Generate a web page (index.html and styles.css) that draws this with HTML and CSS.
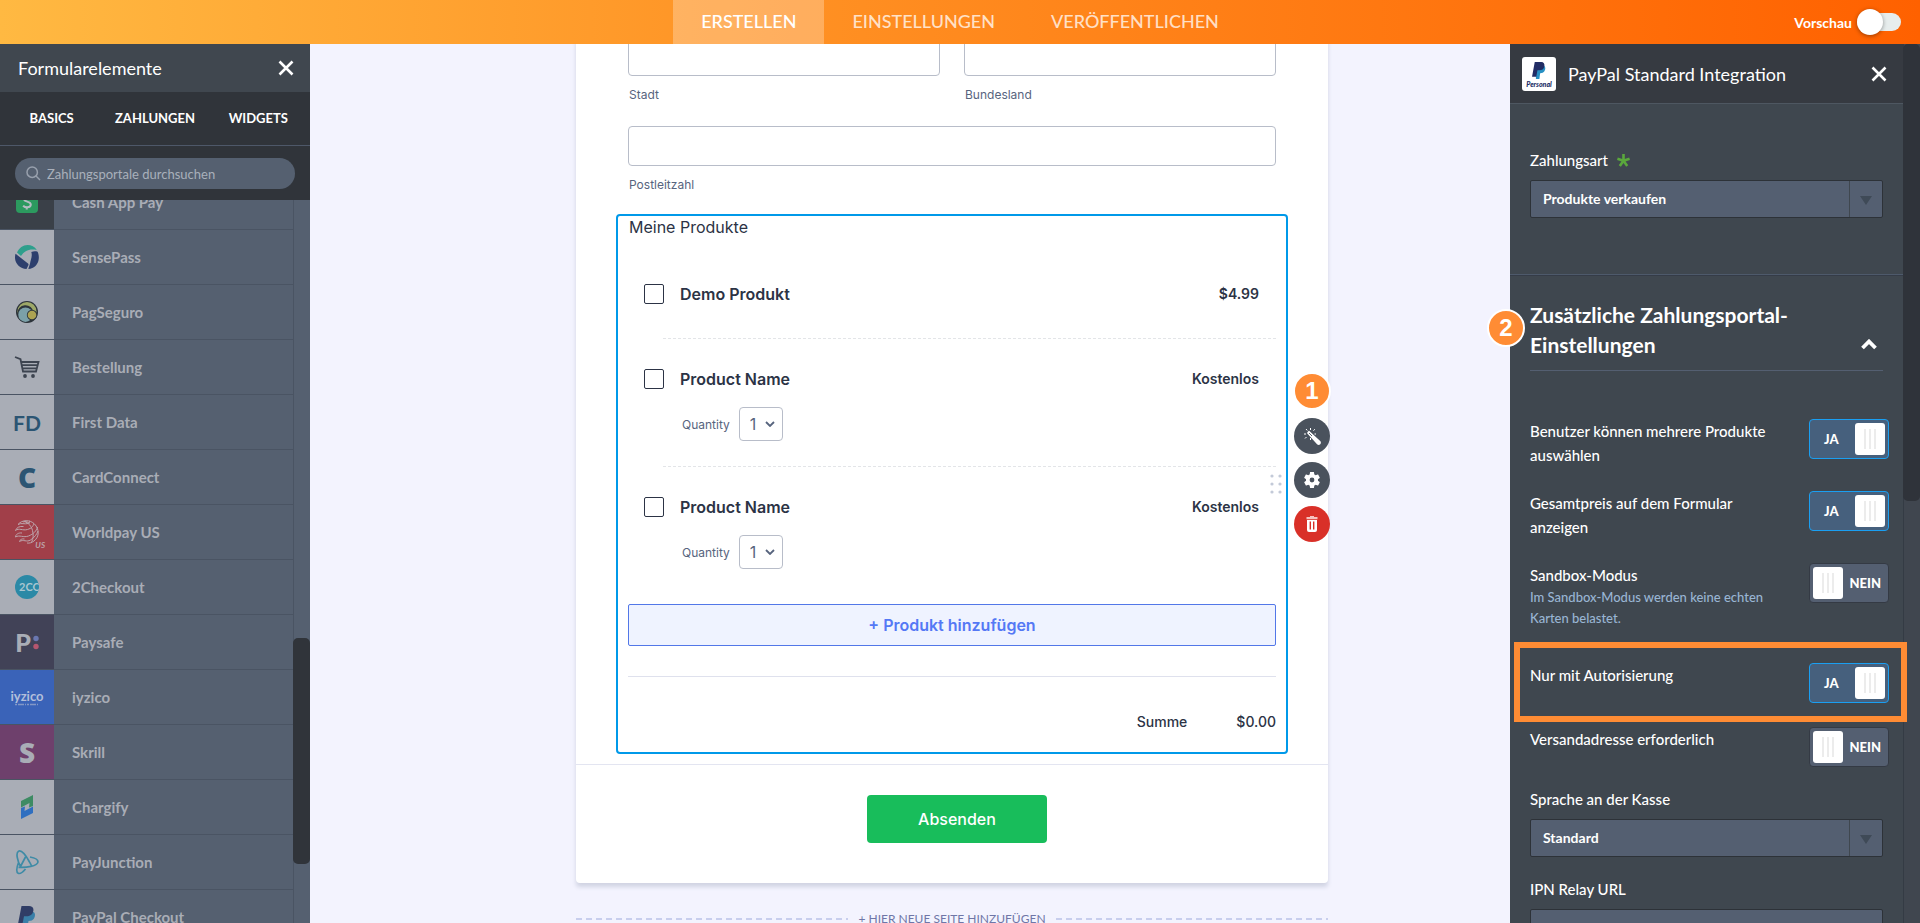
FILE: index.html
```html
<!DOCTYPE html>
<html lang="de">
<head>
    <meta charset="UTF-8">
    <meta name="viewport" content="width=device-width, initial-scale=1.0">
    <title>Formular-Generator</title>
    <link rel="stylesheet" href="styles.css">
</head>
<body>
    <header class="topbar">
        <nav class="nav">
            <a class="nav-tab active" href="#">ERSTELLEN</a>
            <a class="nav-tab" href="#">EINSTELLUNGEN</a>
            <a class="nav-tab" href="#">VERÖFFENTLICHEN</a>
        </nav>
        <label class="preview">
            Vorschau
            <input type="checkbox" class="preview-input">
        </label>
    </header>

    <main class="workspace">
        <!-- Form elements -->
        <aside class="elements">
            <div class="elements-header">
                <h2 class="panel-title">Formularelemente</h2>
                <button type="button" class="close" aria-label="Schließen">
                    <svg width="16" height="16" viewBox="0 0 16 16"><path d="M1.500 1.500L14.500 14.500M14.500 1.500L1.500 14.500" stroke="#fff" stroke-width="2.600"/></svg>
                </button>
            </div>
            <nav class="elements-tabs">
                <a href="#">BASICS</a>
                <a href="#">ZAHLUNGEN</a>
                <a href="#">WIDGETS</a>
            </nav>
            <div class="search">
                <div class="search-box">
                    <svg width="15" height="15" viewBox="0 0 15 15" fill="none" stroke="#98a0ad" stroke-width="1.5"><circle cx="6.2" cy="6.2" r="5.2"/><path d="M10 10L14 14"/></svg>
                    <input type="text" placeholder="Zahlungsportale durchsuchen" aria-label="Zahlungsportale durchsuchen">
                </div>
            </div>
            <div class="elements-scroll">
                <ul class="gateways">
                    <li class="gateway">
                        <span class="gateway-icon bg-cash"><svg width="22" height="22" viewBox="0 0 22 22"><rect width="22" height="22" rx="4" fill="#2c9a5f"/><path d="M14.6 7.2C13.6 6.3 12.4 5.9 11 5.9c-1.800 0-3 .8-3 2.200 0 3.400 6.800 1.700 6.800 5.500 0 1.700-1.500 2.700-3.500 2.700-1.600 0-3.100-.5-4.200-1.600M12 3.500l-.5 2.500M11 16l-.5 2.500" fill="none" stroke="#b5bcc2" stroke-width="2"/></svg></span>
                        <span class="gateway-name">Cash App Pay</span>
                    </li>
                    <li class="gateway">
                        <span class="gateway-icon"><svg width="24" height="24" viewBox="0 0 24 24"><path d="M2 7.500C4 3 8 0 12.500 0c4 0 7.200 1.700 9.300 5-4.500-.8-8.300-.3-11 1.200C8.700 7.400 7.300 9 6 11z" fill="#2e9f8c"/><path d="M.6 8.800L13 18.500c.8.700.6 1.500 0 2.500l-1.500 3C5 24-.3 18.500 0 12c0-1.200.2-2.200.6-3.200z" fill="#2d3f6d"/><path d="M16.300 7c2.200-.8 4.400-.9 6.300-.2 2.600 5.600 1.200 13.200-5.300 16.200-1.300.6-2.600.9-4 1l1.700-5.200c.3-4 2.800-7.300 1.300-11.800z" fill="#2d3f6d"/></svg></span>
                        <span class="gateway-name">SensePass</span>
                    </li>
                    <li class="gateway">
                        <span class="gateway-icon"><svg width="22" height="22" viewBox="0 0 22 22"><circle cx="11" cy="11" r="11" fill="#2d343b"/><circle cx="11" cy="10.500" r="9.500" fill="#9da868"/><path d="M1.500 13a8 8 0 0 1 16-1.500l2.500 5A11 11 0 0 1 3 18z" fill="#2d343b"/><circle cx="9.500" cy="13.700" r="7.200" fill="#7ba0a8"/><circle cx="16" cy="14" r="5.200" fill="#2d343b"/><circle cx="16" cy="14" r="4.300" fill="#ada352"/></svg></span>
                        <span class="gateway-name">PagSeguro</span>
                    </li>
                    <li class="gateway">
                        <span class="gateway-icon"><svg width="26" height="24" viewBox="0 0 26 24" fill="none" stroke="#3d4450" stroke-width="1.800"><path d="M1 2l5.500 2.200L9 16.500h13L24.500 7H7.500M8.500 10.200h15M8.800 13.400h14"/><circle cx="11" cy="21" r="1.900" fill="#3d4450" stroke="none"/><circle cx="19" cy="21" r="1.900" fill="#3d4450" stroke="none"/></svg></span>
                        <span class="gateway-name">Bestellung</span>
                    </li>
                    <li class="gateway">
                        <span class="gateway-icon logo-fd">FD</span>
                        <span class="gateway-name">First Data</span>
                    </li>
                    <li class="gateway">
                        <span class="gateway-icon logo-c">C</span>
                        <span class="gateway-name">CardConnect</span>
                    </li>
                    <li class="gateway">
                        <span class="gateway-icon bg-worldpay"><svg width="24" height="24" viewBox="0 0 24 24" fill="none" stroke="#bda4ab" stroke-width="1"><path d="M3 4.500C7-.5 15-.5 19.500 4c5 5 5 13-.5 17-2 1.500-4.500 2.500-7 2"/><path d="M3 4.500C6 2.500 10 4.500 13 3.500c2-.7 2.500-2 1-2.800M.5 10.500c3.500-3 7 .5 12-1 4-1.300 6-3 6-6M.5 10.500c1-3 4-4.500 8-4M.5 17c4-2.500 8 1 13-1 5-2 8-5 9-9M.5 17c0-2.500 3-4.500 6.500-4M4.500 21.500c4-2.500 7 1 11-1.500s6.500-6 7.500-9M4.500 21.500c.5-2 2.500-3 5-2.500M9 1.500c5 1.500 7.500 5 8.500 9s1 8-1 12M14.500 3.500c-2-2-4-2.500-6.500-1.500"/></svg><small>US</small></span>
                        <span class="gateway-name">Worldpay US</span>
                    </li>
                    <li class="gateway">
                        <span class="gateway-icon"><span class="logo-2co">2CO</span></span>
                        <span class="gateway-name">2Checkout</span>
                    </li>
                    <li class="gateway">
                        <span class="gateway-icon bg-paysafe logo-p">P<svg width="6" height="15" viewBox="0 0 6 15"><circle cx="3" cy="3.500" r="2.700" fill="#6a77b0"/><circle cx="3" cy="11.500" r="2.700" fill="#b5566f"/></svg></span>
                        <span class="gateway-name">Paysafe</span>
                    </li>
                    <li class="gateway">
                        <span class="gateway-icon bg-iyzico logo-iyzico">iyzico<svg width="24" height="3" viewBox="0 0 24 3"><path d="M0 1.500h24" stroke="#8398c6" stroke-width="1.500" stroke-dasharray="2 1 6 1 1 1"/></svg></span>
                        <span class="gateway-name">iyzico</span>
                    </li>
                    <li class="gateway">
                        <span class="gateway-icon bg-skrill logo-s">S</span>
                        <span class="gateway-name">Skrill</span>
                    </li>
                    <li class="gateway">
                        <span class="gateway-icon"><svg width="12" height="24" viewBox="0 0 12 24"><path d="M0 6L12 0v11l-4 1.500.500-4.500L0 12.500z" fill="#3d8b63"/><path d="M12 18L0 24V13l4-1.500-.5 4.500L12 11.500z" fill="#2f6fc0"/></svg></span>
                        <span class="gateway-name">Chargify</span>
                    </li>
                    <li class="gateway">
                        <span class="gateway-icon"><svg width="24" height="26" viewBox="0 0 24 26" fill="none" stroke="#3f8ba6" stroke-width="1.700"><path d="M5.500 17.500C2.500 12 .5 4 3.500 2.200 7 .5 11.500 7.500 14.500 13c1 1.700 1.600 2.700 2 4M3.700 13C2 17.500.8 23 3.200 24.300 5 25 8 23 10.500 20M3.500 18.300C11 19 22.500 17 23 13c0-2.300-3.500-4.300-8-5M5.500 17.500l5-9.500"/></svg></span>
                        <span class="gateway-name">PayJunction</span>
                    </li>
                    <li class="gateway">
                        <span class="gateway-icon"><svg width="18" height="22" viewBox="0 0 18 22"><path d="M5 6h10.500c2 1 1.800 4.500.5 6.500-1 1.700-3 2.500-5.500 2.500L9.500 21H4z" fill="#3a7fa8"/><path d="M3.500 0H11c3 0 5 1.500 4.300 5-.7 3.800-3.300 5.300-6.800 5.300H6L4.500 18H0z" fill="#303d66"/></svg></span>
                        <span class="gateway-name">PayPal Checkout</span>
                    </li>
                </ul>
                <span class="elements-thumb"></span>
            </div>
        </aside>

        <!-- Form canvas -->
        <section class="canvas">
            <form class="form-card">
                <div class="form-body">
                    <div class="address-row">
                        <div class="address-field">
                            <input type="text" id="city">
                            <label for="city">Stadt</label>
                        </div>
                        <div class="address-field">
                            <input type="text" id="state">
                            <label for="state">Bundesland</label>
                        </div>
                    </div>
                    <div class="address-row">
                        <div class="address-field">
                            <input type="text" id="zip">
                            <label for="zip">Postleitzahl</label>
                        </div>
                    </div>

                    <div class="question selected">
                        <h3 class="question-title">Meine Produkte</h3>
                        <ul class="products">
                            <li class="product">
                                <div class="product-line">
                                    <input type="checkbox" id="product1">
                                    <label for="product1">Demo Produkt</label>
                                    <span class="price">$4.99</span>
                                </div>
                            </li>
                            <li class="product has-quantity">
                                <div class="product-line">
                                    <input type="checkbox" id="product2">
                                    <label for="product2">Product Name</label>
                                    <span class="price">Kostenlos</span>
                                </div>
                                <div class="quantity">
                                    <label for="quantity2">Quantity</label>
                                    <span class="quantity-select">
                                        <select id="quantity2"><option>1</option></select>
                                        <svg width="10" height="6" viewBox="0 0 10 6"><path d="M1 1l4 4 4-4" fill="none" stroke="#57647e" stroke-width="1.800"/></svg>
                                    </span>
                                </div>
                            </li>
                            <li class="product has-quantity">
                                <div class="product-line">
                                    <input type="checkbox" id="product3">
                                    <label for="product3">Product Name</label>
                                    <span class="price">Kostenlos</span>
                                </div>
                                <div class="quantity">
                                    <label for="quantity3">Quantity</label>
                                    <span class="quantity-select">
                                        <select id="quantity3"><option>1</option></select>
                                        <svg width="10" height="6" viewBox="0 0 10 6"><path d="M1 1l4 4 4-4" fill="none" stroke="#57647e" stroke-width="1.800"/></svg>
                                    </span>
                                </div>
                            </li>
                        </ul>
                        <button type="button" class="add-product">+ Produkt hinzufügen</button>
                        <div class="total">
                            <span>Summe</span>
                            <span>$0.00</span>
                        </div>

                        <svg class="drag-handle" width="12" height="20" viewBox="0 0 12 20" fill="#c3cad8"><circle cx="2" cy="2" r="1.600"/><circle cx="10" cy="2" r="1.600"/><circle cx="2" cy="10" r="1.600"/><circle cx="10" cy="10" r="1.600"/><circle cx="2" cy="18" r="1.600"/><circle cx="10" cy="18" r="1.600"/></svg>
                        <div class="tools">
                            <span class="badge">1</span>
                            <button type="button" class="tool" aria-label="Assistent">
                                <svg width="18" height="18" viewBox="0 0 18 18"><path d="M6 4.800L16.600 14.700a1.300 1.300 0 0 1-1.900 1.900L5 6z" fill="#fff" stroke="#fff" stroke-width="1.800" stroke-linejoin="round"/><path d="M6 6l3 3" stroke="#4a525d" stroke-width=".9"/><path d="M7.500 1v2M3 2l1.300 1.500M1 7h2M2 11.500L3.500 10M7.500 11v2M11.800 2.200L10.500 3.700M11.500 7H13" stroke="#fff" stroke-width="1"/></svg>
                            </button>
                            <button type="button" class="tool" aria-label="Eigenschaften">
                                <svg width="16" height="16" viewBox="2 2 20 20"><path fill="#fff" d="M19.430 12.980c.040-.320.070-.640.070-.980s-.030-.660-.070-.980l2.110-1.650c.190-.150.240-.420.120-.640l-2-3.460c-.120-.220-.390-.300-.610-.220l-2.490 1c-.520-.400-1.080-.730-1.690-.980l-.380-2.650C14.460 2.180 14.250 2 14 2h-4c-.250 0-.460.180-.490.420l-.380 2.650c-.610.250-1.170.590-1.690.980l-2.490-1c-.230-.090-.490 0-.610.220l-2 3.460c-.130.220-.070.490.120.640l2.110 1.650c-.040.320-.070.650-.070.980s.030.660.070.980l-2.110 1.650c-.190.150-.240.420-.120.640l2 3.460c.120.220.390.300.610.220l2.490-1c.520.400 1.080.730 1.690.980l.380 2.650c.030.240.240.420.490.420h4c.250 0 .460-.180.490-.420l.380-2.650c.610-.250 1.170-.590 1.690-.980l2.490 1c.230.090.490 0 .610-.220l2-3.460c.120-.220.070-.490-.120-.640l-2.110-1.650zM12 15a3 3 0 1 1 0-6 3 3 0 0 1 0 6z"/></svg>
                            </button>
                            <button type="button" class="tool delete" aria-label="Löschen">
                                <svg width="12" height="16" viewBox="0 0 12 16"><path d="M4 0h4v1h3.500v2.200H.5V1H4z" fill="#f6c3c0"/><path fill="#fff" fill-rule="evenodd" d="M1 4h10v10a2 2 0 0 1-2 2H3a2 2 0 0 1-2-2zM3.600 5.500v8H5v-8zM7 5.500v8h1.400v-8z"/></svg>
                            </button>
                        </div>
                    </div>
                </div>
                <div class="form-footer">
                    <button type="button" class="submit">Absenden</button>
                </div>
            </form>
            <button type="button" class="add-page">+ HIER NEUE SEITE HINZUFÜGEN</button>
        </section>

        <!-- Integration settings -->
        <aside class="settings">
            <div class="settings-content">
                <div class="settings-header">
                    <span class="paypal-logo">
                        <svg width="14" height="17" viewBox="0 0 18 22"><path d="M5 5h10.500c2 1 2.300 4.500.5 7-1 1.700-3 2.500-5.500 2.500L9.500 22H5z" fill="#2790c3"/><path d="M3.500 0H12c3 0 4.500 2.500 4 5.500-.700 3.800-3.300 5.300-6.800 5.300H7L5.500 19H0z" fill="#222d65"/></svg>
                        <small>Personal</small>
                    </span>
                    <h2 class="panel-title">PayPal Standard Integration</h2>
                    <button type="button" class="close" aria-label="Schließen">
                        <svg width="16" height="16" viewBox="0 0 16 16"><path d="M1.500 1.500L14.500 14.500M14.500 1.500L1.500 14.500" stroke="#fff" stroke-width="2.600"/></svg>
                    </button>
                </div>

                <div class="settings-section">
                    <div class="field">
                        <label for="payment-type">Zahlungsart <svg class="required" width="13" height="13" viewBox="0 0 13 13"><path d="M6.500 0v6.800M.4 4.800l6.100 2M12.600 4.800l-6.100 2M2.800 12l3.700-5.200M10.200 12L6.500 6.800" stroke="#5aa83c" stroke-width="2.600"/></svg></label>
                        <span class="select-box">
                            <select id="payment-type"><option>Produkte verkaufen</option></select>
                        </span>
                    </div>
                </div>

                <div class="settings-group">
                    <div class="group-header">
                        <span class="badge">2</span>
                        <h3>Zusätzliche Zahlungsportal-Einstellungen</h3>
                        <button type="button" class="collapse" aria-label="Einklappen">
                            <svg width="16" height="11" viewBox="0 0 16 11"><path d="M1.500 9L8 2.500 14.500 9" fill="none" stroke="#fff" stroke-width="3.800"/></svg>
                        </button>
                    </div>
                    <div class="options">
                        <label class="option">
                            <span class="option-text">Benutzer können mehrere Produkte auswählen</span>
                            <span class="toggle"><input type="checkbox" checked><span class="on">JA</span><span class="knob"></span><span class="off">NEIN</span></span>
                        </label>
                        <label class="option">
                            <span class="option-text">Gesamtpreis auf dem Formular anzeigen</span>
                            <span class="toggle"><input type="checkbox" checked><span class="on">JA</span><span class="knob"></span><span class="off">NEIN</span></span>
                        </label>
                        <label class="option">
                            <span class="option-text">Sandbox-Modus<small>Im Sandbox-Modus werden keine echten Karten belastet.</small></span>
                            <span class="toggle"><input type="checkbox"><span class="on">JA</span><span class="knob"></span><span class="off">NEIN</span></span>
                        </label>
                        <label class="option highlight">
                            <span class="option-text">Nur mit Autorisierung</span>
                            <span class="toggle"><input type="checkbox" checked><span class="on">JA</span><span class="knob"></span><span class="off">NEIN</span></span>
                        </label>
                        <label class="option">
                            <span class="option-text">Versandadresse erforderlich</span>
                            <span class="toggle"><input type="checkbox"><span class="on">JA</span><span class="knob"></span><span class="off">NEIN</span></span>
                        </label>
                        <div class="field">
                            <label for="language">Sprache an der Kasse</label>
                            <span class="select-box">
                                <select id="language"><option>Standard</option></select>
                            </span>
                        </div>
                        <div class="field">
                            <label for="ipn">IPN Relay URL</label>
                            <input type="text" id="ipn">
                        </div>
                    </div>
                </div>
            </div>
            <div class="settings-scrollbar"><span></span></div>
        </aside>
    </main>
</body>
</html>
```
FILE: styles.css
```css
* {
    box-sizing: border-box;
}
body {
    display: flex;
    flex-direction: column;
    height: 100vh;
    margin: 0;
    overflow: hidden;
    background-color: #f3f3fe;
    color: #fff;
    font-family: Lato, "Open Sans", sans-serif;
    font-size: 15px;
}
h2, h3, ul {
    margin: 0;
    padding: 0;
    list-style: none;
}
a {
    color: inherit;
    text-decoration: none;
}
button, input, select {
    margin: 0;
    padding: 0;
    border: 0;
    background: none;
    color: inherit;
    font: inherit;
}
button svg {
    display: block;
}

/* Top bar */
.topbar {
    display: grid;
    grid-template-columns: 1fr auto 1fr;
    flex: none;
    height: 44px;
    background: linear-gradient(to right, #ffb942, #ff9224 40%, #ff6100);
}
.nav {
    display: flex;
    grid-column: 2;
}
.nav-tab {
    padding: 0 28px;
    color: rgba(255, 255, 255, 0.75);
    font-size: 18px;
    font-weight: 500;
    line-height: 43px;
}
.nav-tab.active {
    background-color: rgba(255, 255, 255, 0.27);
    color: #fff;
}
.preview {
    display: flex;
    align-items: center;
    justify-self: end;
    gap: 5px;
    padding-right: 19px;
    font-size: 14px;
    font-weight: 700;
}
.preview-input {
    display: flex;
    align-items: center;
    width: 44px;
    height: 18px;
    border-radius: 9px;
    background-color: #e7eded;
    appearance: none;
}
.preview-input::before {
    content: "";
    flex: none;
    width: 26px;
    height: 26px;
    border-radius: 50%;
    background-color: #fff;
    box-shadow: 0 1px 4px rgba(0, 0, 0, 0.4);
}

.workspace {
    display: grid;
    grid-template-columns: 310px 1fr 410px;
    flex: 1;
    min-height: 0;
}
.panel-title {
    font-size: 18px;
    font-weight: 400;
}
.close {
    margin-left: auto;
}

/* Left panel */
.elements {
    display: flex;
    flex-direction: column;
    min-height: 0;
    background-color: #30343a;
}
.elements-header {
    display: flex;
    align-items: center;
    height: 48px;
    padding: 0 16px 0 18px;
    background-color: #40474f;
}
.elements-tabs {
    display: grid;
    grid-template-columns: repeat(3, 1fr);
    border-bottom: 1px solid #4e5869;
    font-size: 13px;
    font-weight: 700;
    line-height: 53px;
    text-align: center;
}
.search {
    padding: 12px 15px 11px;
}
.search-box {
    display: flex;
    align-items: center;
    gap: 6px;
    height: 31px;
    padding: 0 11px;
    border-radius: 16px;
    background-color: #556070;
}
.search-box input {
    flex: 1;
    font-size: 13px;
    outline: none;
}
.search-box input::placeholder {
    color: #a9b0bb;
}
.elements-scroll {
    position: relative;
    flex: 1;
    overflow: hidden;
    background-color: #556070;
}
.gateways {
    margin: -25px 16px 0 0;
}
.gateway {
    display: flex;
    height: 55px;
    border-right: 1px solid #4a5463;
    border-bottom: 1px solid #4a5463;
}
.gateway-icon {
    display: flex;
    align-items: center;
    justify-content: center;
    width: 54px;
    background-color: #a9adb6;
}
.gateway-name {
    padding-left: 18px;
    color: #a9adb6;
    font-weight: 700;
    line-height: 54px;
}
.elements-thumb {
    position: absolute;
    top: 438px;
    right: 0;
    width: 17px;
    height: 226px;
    border-radius: 5px;
    background-color: #30343a;
}
.bg-cash {
    background-color: #3a4048;
}
.bg-worldpay {
    position: relative;
    background-color: #a13f49;
}
.bg-worldpay small {
    position: absolute;
    right: 9px;
    bottom: 9px;
    color: #bda4ab;
    font-size: 8px;
    font-style: italic;
    font-weight: 700;
}
.bg-paysafe {
    background-color: #414257;
}
.bg-iyzico {
    background-color: #3a63b8;
}
.bg-skrill {
    background-color: #6e406c;
}
.logo-fd {
    color: #2c5573;
    font-size: 21px;
    font-weight: 700;
}
.logo-c {
    color: #2c5573;
    font-family: "Open Sans", sans-serif;
    font-size: 28px;
    font-weight: 800;
}
.logo-2co {
    width: 24px;
    padding-left: 4px;
    overflow: hidden;
    border-radius: 50%;
    background-color: #2b89a6;
    color: #a9c6d0;
    font-size: 11px;
    font-weight: 700;
    line-height: 24px;
}
.logo-p {
    gap: 2px;
    color: #a9adb6;
    font-size: 25px;
    font-weight: 900;
}
.logo-iyzico {
    flex-direction: column;
    color: #b2bfdb;
    font-size: 13px;
    font-weight: 700;
    line-height: 14px;
}
.logo-s {
    color: #a9adb6;
    font-family: "Open Sans", sans-serif;
    font-size: 28px;
    font-weight: 800;
}

/* Form canvas */
.canvas {
    display: flex;
    flex-direction: column;
    align-items: center;
    min-height: 0;
    padding-left: 84px;
    overflow: hidden;
    font-family: Inter, sans-serif;
}
.form-card {
    flex: none;
    width: 100%;
    max-width: 752px;
    margin-top: -8px;
    border-radius: 4px;
    background-color: #fff;
    box-shadow: 0 4px 4px rgba(87, 100, 126, 0.21);
    color: #2c3345;
}
.form-body {
    padding: 0 52px 10px;
    border-bottom: 1px solid #e3e5f1;
}
.address-row {
    display: flex;
    gap: 24px;
    margin-bottom: 23px;
}
.address-field {
    display: flex;
    flex: 1;
    flex-direction: column;
    gap: 11px;
}
.address-field input {
    width: 100%;
    height: 40px;
    border: 1px solid #b8bdc9;
    border-radius: 4px;
}
.address-field label {
    padding-left: 1px;
    color: #57647e;
    font-size: 12px;
    line-height: 16px;
}
.question {
    position: relative;
    margin: -2px -12px 0;
    padding: 0 10px 20px;
    border: 2px solid transparent;
    border-radius: 4px;
}
.question.selected {
    border-color: #0099e9;
}
.question-title {
    padding-left: 1px;
    font-size: 16px;
    font-weight: 400;
    line-height: 22px;
}
.products {
    margin-top: 16px;
    padding-bottom: 10px;
}
.product {
    padding-top: 30px;
}
.product::after {
    content: "";
    display: block;
    margin: 34px 0 0 35px;
    border-bottom: 1px dashed #e3e5e8;
}
.has-quantity::after {
    margin-top: 25px;
}
.product:last-child::after {
    border-bottom: 0;
}
.product-line {
    display: flex;
    align-items: center;
    gap: 16px;
    padding: 0 17px 0 16px;
    font-size: 16px;
    font-weight: 600;
    line-height: 20px;
}
.product-line input {
    width: 20px;
    height: 20px;
    border: 1px solid #2c3345;
    border-radius: 2px;
    appearance: none;
}
.price {
    margin-left: auto;
    font-size: 14px;
}
.quantity {
    display: flex;
    align-items: center;
    gap: 9px;
    margin-top: 18px;
    padding-left: 54px;
    color: #57647e;
    font-size: 12px;
}
.quantity-select {
    position: relative;
    display: flex;
}
.quantity-select select {
    width: 44px;
    height: 34px;
    padding-left: 10px;
    border: 1px solid #b8bdc9;
    border-radius: 4px;
    font-size: 16px;
    appearance: none;
}
.quantity-select svg {
    position: absolute;
    top: 14px;
    right: 8px;
    pointer-events: none;
}
.add-product {
    width: 100%;
    height: 42px;
    border: 1px solid #5277e8;
    border-radius: 2px;
    background-color: #eff3ff;
    color: #5478f5;
    font-size: 16px;
    font-weight: 600;
}
.total {
    display: flex;
    justify-content: flex-end;
    gap: 49px;
    margin-top: 30px;
    padding-top: 35px;
    border-top: 1px solid #dfe1ed;
    font-size: 14px;
    font-weight: 500;
    line-height: 20px;
}
.drag-handle {
    position: absolute;
    top: 258px;
    right: 4px;
}
.tools {
    position: absolute;
    top: 156px;
    left: calc(100% + 7px);
    display: flex;
    flex-direction: column;
    align-items: center;
    gap: 8px;
}
.tool {
    display: flex;
    align-items: center;
    justify-content: center;
    width: 36px;
    height: 36px;
    border-radius: 50%;
    background-color: #4a525d;
}
.tool.delete {
    background-color: #d93028;
}
.badge {
    width: 38px;
    height: 38px;
    border: 2px solid #fff;
    border-radius: 50%;
    background-color: #ff8c34;
    color: #fff;
    font-family: "Liberation Sans", sans-serif;
    font-size: 24px;
    font-weight: 700;
    line-height: 34px;
    text-align: center;
}
.form-footer {
    padding: 30px 0 40px 10px;
    text-align: center;
}
.submit {
    width: 180px;
    height: 48px;
    border-radius: 4px;
    background-color: #18bd5b;
    color: #fff;
    font-size: 16px;
    font-weight: 500;
}
.add-page {
    display: flex;
    flex: none;
    align-items: center;
    gap: 10px;
    width: 100%;
    max-width: 752px;
    margin-top: 28px;
    color: #6f76a7;
    font-family: Lato, sans-serif;
    font-size: 12px;
    line-height: 16px;
}
.add-page::before, .add-page::after {
    content: "";
    flex: 1;
    height: 2px;
    background: repeating-linear-gradient(to right, #c8ceed 0 6px, transparent 6px 10px);
}

/* Right panel */
.settings {
    display: flex;
    min-height: 0;
    background-color: #3f474f;
}
.settings-content {
    position: relative;
    z-index: 1;
    flex: 1;
}
.settings-header {
    display: flex;
    align-items: center;
    gap: 12px;
    height: 60px;
    padding: 0 16px 0 12px;
    border-bottom: 1px solid #4e5761;
    background-color: #363a41;
}
.paypal-logo {
    display: flex;
    flex-direction: column;
    align-items: center;
    gap: 1px;
    width: 34px;
    height: 34px;
    padding-top: 5px;
    border-radius: 3px;
    background-color: #fff;
}
.paypal-logo small {
    color: #222d65;
    font-size: 7px;
    font-style: italic;
    font-weight: 900;
    line-height: 9px;
}
.settings-section {
    padding: 48px 20px 56px;
    border-bottom: 1px solid #4e5a6b;
}
.field {
    display: flex;
    flex-direction: column;
    gap: 12px;
    line-height: 16px;
}
.field label {
    display: flex;
    align-items: center;
    gap: 9px;
    font-weight: 500;
}
.field input, .field select {
    width: 100%;
    height: 38px;
    padding: 0 12px;
    border: 1px solid #2d3238;
    border-radius: 2px;
    background-color: #545f71;
    font-size: 14px;
    font-weight: 700;
    appearance: none;
}
.select-box {
    position: relative;
    display: flex;
}
.select-box::before {
    content: "";
    position: absolute;
    top: 1px;
    right: 33px;
    bottom: 1px;
    border-right: 1px solid #3f474f;
}
.select-box::after {
    content: "";
    position: absolute;
    top: 16px;
    right: 11px;
    border: 6px solid transparent;
    border-top: 9px solid #3f4a57;
    border-bottom: 0;
}
.settings-group {
    padding-top: 24px;
    border-top: 1px solid #353c48;
}
.group-header {
    position: relative;
    display: flex;
    align-items: flex-end;
    justify-content: space-between;
    margin: 0 20px;
    padding-bottom: 10px;
    border-bottom: 1px solid #545f71;
}
.group-header h3 {
    max-width: 280px;
    font-size: 21px;
    font-weight: 700;
    line-height: 30px;
}
.group-header .badge {
    position: absolute;
    top: 9px;
    left: -43px;
}
.collapse {
    padding: 0 6px 10px;
}
.options {
    display: flex;
    flex-direction: column;
    gap: 24px;
    padding: 48px 14px 0 20px;
}
.options .field {
    margin-right: 6px;
}
.option {
    position: relative;
    display: flex;
    align-items: flex-start;
    justify-content: space-between;
    gap: 28px;
    font-weight: 500;
    line-height: 24px;
}
.option small {
    display: block;
    margin-bottom: 10px;
    color: #99b5d3;
    font-size: 13px;
    line-height: 21px;
}
.highlight::after {
    content: "";
    position: absolute;
    inset: -21px -18px -19px -16px;
    border: 6px solid #ff8c34;
    pointer-events: none;
}
.toggle {
    display: flex;
    flex: none;
    align-items: center;
    justify-content: space-between;
    width: 80px;
    height: 40px;
    padding: 0 3px;
    border: 1px solid #343a44;
    border-radius: 4px;
    background-color: #545f71;
    font-size: 13px;
    font-weight: 900;
}
.toggle input {
    position: absolute;
    opacity: 0;
}
.toggle .on {
    display: none;
    padding-left: 11px;
}
.toggle .off {
    padding-right: 4px;
}
.toggle:has(:checked) {
    border-color: #1a9ff2;
    background-color: #46607d;
}
.toggle:has(:checked) .on {
    display: block;
}
.toggle:has(:checked) .off {
    display: none;
}
.knob {
    width: 30px;
    height: 32px;
    border-radius: 3px;
    background: repeating-linear-gradient(to right, #ececec 0 2px, transparent 2px 5px) 9px 6px / 12px 20px no-repeat #fff;
}
.settings-scrollbar {
    width: 17px;
    border-left: 1px solid #343b44;
    background-color: #40464f;
}
.settings-scrollbar span {
    display: block;
    height: 457px;
    margin-left: -1px;
    border-radius: 5px;
    background-color: #2f333a;
}
```
